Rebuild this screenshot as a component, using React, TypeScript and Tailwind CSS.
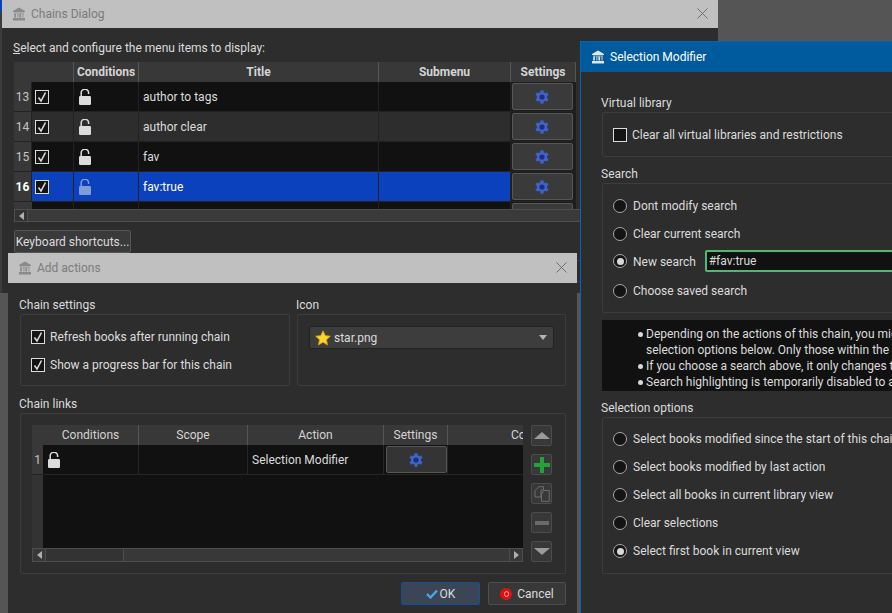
import type { ReactNode } from "react";

const LibraryIcon = ({ className }: { className: string }) => (
  <svg viewBox="0 0 14 14" className={`h-[14px] w-[14px] shrink-0 ${className}`}>
    <path d="M7 0.5 L13 4 V5 H1 V4 Z" fill="currentColor" />
    <rect x="2" y="5.5" width="10" height="1" fill="currentColor" opacity="0.7" />
    <rect x="2.2" y="6.5" width="1.7" height="4" fill="currentColor" />
    <rect x="5" y="6.5" width="1.7" height="4" fill="currentColor" opacity="0.55" />
    <rect x="7.4" y="6.5" width="1.7" height="4" fill="currentColor" />
    <rect x="10.2" y="6.5" width="1.7" height="4" fill="currentColor" opacity="0.55" />
    <rect x="1" y="11" width="12" height="2.5" fill="currentColor" />
  </svg>
);

const CloseIcon = () => (
  <svg viewBox="0 0 11 11" className="h-[11px] w-[11px] text-[#6f6f6f]">
    <path d="M0.5 0.5 L10.5 10.5 M10.5 0.5 L0.5 10.5" stroke="currentColor" strokeWidth="1" />
  </svg>
);

const LockIcon = ({ selected }: { selected?: boolean }) => (
  <svg viewBox="0 0 12 16" className={`h-[16px] w-[12px] ${selected ? "text-[#7f9cd9]" : "text-[#dcdcdc]"}`}>
    <path d="M2.2 8 V4.2 A3.6 3.6 0 0 1 9.6 3.6 V5" fill="none" stroke="currentColor" strokeWidth="1.5" />
    <rect x="0" y="7" width="12" height="9" rx="1.2" fill="currentColor" />
  </svg>
);

const GearIcon = () => (
  <svg viewBox="0 0 16 16" className="h-[14px] w-[14px]">
    {[0, 60, 120, 180, 240, 300].map((a) => (
      <rect key={a} x="6.2" y="0.4" width="3.6" height="3.2" fill="#3f63cf" transform={`rotate(${a} 8 8)`} />
    ))}
    <circle cx="8" cy="8" r="5.8" fill="#3f63cf" />
    <circle cx="8" cy="8" r="3" fill="#1f2f78" />
  </svg>
);

const Check = () => (
  <svg viewBox="0 0 12 12" className="h-[12px] w-[12px] text-[#d8d8d8]">
    <path d="M2.5 6.5 L5 10 L9.5 1.5" fill="none" stroke="currentColor" strokeWidth="1.6" />
  </svg>
);

const Checkbox = ({ checked }: { checked?: boolean }) => (
  <span className="flex h-[14px] w-[14px] shrink-0 items-center justify-center border border-[#dcdcdc] bg-[#141414]">
    {checked && <Check />}
  </span>
);

const Radio = ({ checked }: { checked?: boolean }) => (
  <span className="flex h-[14px] w-[14px] shrink-0 items-center justify-center rounded-full border border-[#a8a8a8] bg-[#141414]">
    {checked && <span className="h-[7px] w-[7px] rounded-full bg-[#d8d8d8]" />}
  </span>
);

const TitleBar = ({ title, active, close, className }: { title: string; active?: boolean; close?: boolean; className: string }) => (
  <div className={`flex shrink-0 items-center pb-[1px] pl-[10px] ${className} ${active ? "bg-[#005a9e] text-white" : "bg-[#c0c0c0] text-[#7b7b7b]"}`}>
    <LibraryIcon className={active ? "text-[#e4e4e4]" : "text-[#8a8a8a]"} />
    <span className="ml-[5px] flex-1">{title}</span>
    {close && (
      <span className="mr-[10px] pb-[1px]">
        <CloseIcon />
      </span>
    )}
  </div>
);

const Group = ({ className, children }: { className: string; children: ReactNode }) => (
  <div className={`rounded-[2px] border border-[#3d3d3d] ${className}`}>{children}</div>
);

const Label = ({ className, children }: { className: string; children: ReactNode }) => (
  <div className={`-ml-px flex h-[18px] items-center ${className}`}>{children}</div>
);

const HeaderCell = ({ w, bold, children }: { w: string; bold?: boolean; children?: ReactNode }) => (
  <div className={`flex h-[20px] shrink-0 items-center justify-center border-r border-[#555] text-[#d4d4d4] ${w} ${bold ? "font-bold" : ""}`}>
    {children}
  </div>
);

const SettingsButton = ({ className }: { className: string }) => (
  <div className={`flex h-[27px] w-[61px] items-center justify-center rounded-[2px] border border-[#575757] pr-[1px] ${className}`}>
    <GearIcon />
  </div>
);

const rows = [
  { n: 13, title: "author to tags", bg: "bg-[#111111]" },
  { n: 14, title: "author clear", bg: "bg-[#2d2d2d]" },
  { n: 15, title: "fav", bg: "bg-[#111111]" },
  { n: 16, title: "fav:true", bg: "bg-[#0b41bd]", selected: true },
];

const ChainRow = ({ n, title, bg, selected }: { n: number; title: string; bg: string; selected?: boolean }) => (
  <div className="flex h-[30px]">
    <div className={`flex w-[18px] shrink-0 items-center justify-center border-b border-r border-[#222] bg-[#383838] ${selected ? "font-bold text-white" : "text-[#c4c4c4]"}`}>
      {n}
    </div>
    <div className={`flex w-[42px] shrink-0 items-center border-b border-r border-[#222] pl-[3px] ${bg}`}>
      <Checkbox checked />
    </div>
    <div className={`flex w-[65px] shrink-0 items-center border-b border-r border-[#222] pl-[5px] ${bg}`}>
      <LockIcon selected={selected} />
    </div>
    <div className={`flex w-[240px] shrink-0 items-center border-b border-r border-[#222] pl-[4px] ${selected ? "text-white" : ""} ${bg}`}>
      {title}
    </div>
    <div className={`w-[132px] shrink-0 border-b border-r border-[#222] ${bg}`} />
    <div className="w-[65px] shrink-0 border-b border-[#222] bg-[#1d1d1d] pl-px pt-px">
      <SettingsButton className="bg-[#3a3a3a]" />
    </div>
  </div>
);

const ChainsDialog = () => (
  <div className="absolute left-[2px] top-0 flex h-[293px] w-[716px] flex-col bg-[#2d2d2d]">
    <TitleBar title="Chains Dialog" close className="h-[28px]" />
    <div className="px-[12px] pt-[12px]">
      <div className="-ml-px h-[16px] leading-[16px]">
        <span className="underline">S</span>elect and configure the menu items to display:
      </div>
      <div className="mt-[6px] w-[640px]">
        <div className="flex w-[562px] bg-[#383838]">
          <HeaderCell w="w-[60px]" />
          <HeaderCell w="w-[65px]" bold>Conditions</HeaderCell>
          <HeaderCell w="w-[240px]" bold>Title</HeaderCell>
          <HeaderCell w="w-[132px]" bold>Submenu</HeaderCell>
          <HeaderCell w="w-[65px]" bold>Settings</HeaderCell>
        </div>
        {rows.map((r) => (
          <ChainRow key={r.n} {...r} />
        ))}
        <div className="flex h-[7px] w-[562px] overflow-hidden">
          <div className="w-[18px] shrink-0 bg-[#383838]" />
          <div className="w-[42px] shrink-0 border-r border-[#222] bg-[#111111]" />
          <div className="w-[65px] shrink-0 border-r border-[#222] bg-[#111111]" />
          <div className="w-[240px] shrink-0 border-r border-[#222] bg-[#111111]" />
          <div className="w-[132px] shrink-0 border-r border-[#222] bg-[#111111]" />
          <div className="w-[65px] shrink-0 bg-[#1d1d1d] pl-px pt-px">
            <SettingsButton className="bg-[#3a3a3a]" />
          </div>
        </div>
        <div className="flex h-[13px] border-y border-[#4e4e4e] bg-[#3a3a3a]">
          <div className="flex w-[14px] items-center justify-center border-x border-[#4e4e4e] bg-[#333]">
            <span className="h-0 w-0 border-y-[4px] border-r-[5px] border-y-transparent border-r-[#b0b0b0]" />
          </div>
        </div>
      </div>
      <button className="mt-[8px] h-[23px] w-[117px] whitespace-nowrap rounded-[2px] border border-[#555] bg-[#3a3a3a] text-center">
        Keyboard shortcuts...
      </button>
    </div>
    <div className="absolute left-[575px] top-[260px] h-[22px] w-[3px] border-y border-[#0b41bd]" />
  </div>
);

const SideButton = ({ children }: { children: ReactNode }) => (
  <div className="flex h-[21px] w-[21px] items-center justify-center rounded-[2px] border border-[#4c4c4c] bg-[#383838]">
    {children}
  </div>
);

const AddActions = () => (
  <div className="absolute left-[8px] top-[253px] flex h-[360px] w-[569px] flex-col bg-[#2d2d2d]">
    <TitleBar title="Add actions" close className="h-[30px]" />
    <div className="pl-[12px] pr-[11px] pt-[13px]">
      <div className="flex gap-[7px]">
        <div className="w-[270px]">
          <Label className="">Chain settings</Label>
          <Group className="h-[72px] pl-[10px] pt-[15px]">
            <div className="flex h-[14px] items-center gap-[5px]">
              <Checkbox checked />
              <span>Refresh books after running chain</span>
            </div>
            <div className="mt-[14px] flex h-[14px] items-center gap-[5px]">
              <Checkbox checked />
              <span>Show a progress bar for this chain</span>
            </div>
          </Group>
        </div>
        <div className="w-[269px]">
          <Label className="">Icon</Label>
          <Group className="h-[72px] pl-[11px] pt-[11px]">
            <div className="flex h-[23px] w-[245px] items-center rounded-[2px] border border-[#222] bg-[#3d3d3d] pl-[5px] pr-[6px]">
              <svg viewBox="0 0 16 16" className="h-[16px] w-[16px] shrink-0">
                <polygon points="8,0.8 10.2,5.6 15.4,6.2 11.5,9.7 12.6,14.9 8,12.3 3.4,14.9 4.5,9.7 0.6,6.2 5.8,5.6" fill="#fbd52a" stroke="#d49e12" strokeWidth="0.8" strokeLinejoin="round" />
              </svg>
              <span className="ml-[3px] flex-1">star.png</span>
              <span className="h-0 w-0 border-x-[4px] border-t-[5px] border-x-transparent border-t-[#b4b4b4]" />
            </div>
          </Group>
        </div>
      </div>
      <Label className="mt-[9px]">Chain links</Label>
      <Group className="flex h-[161px] gap-[8px] pl-[11px] pt-[11px]">
        <div className="h-[137px] w-[491px]">
          <div className="flex bg-[#383838]">
            <HeaderCell w="w-[107px] pl-[11px]">Conditions</HeaderCell>
            <HeaderCell w="w-[109px]">Scope</HeaderCell>
            <HeaderCell w="w-[136px]">Action</HeaderCell>
            <HeaderCell w="w-[64px]">Settings</HeaderCell>
            <div className="w-[75px] overflow-hidden whitespace-nowrap pl-[63px] text-[#d4d4d4] leading-[20px]">
              Comment
            </div>
          </div>
          <div className="flex h-[103px] bg-[#111111]">
            <div className="w-[11px] shrink-0 bg-[#333]">
              <div className="flex h-[30px] items-center justify-center border-b border-[#222] bg-[#383838] text-[#c4c4c4]">1</div>
            </div>
            <div className="flex h-[30px] flex-1 border-b border-[#262626]">
              <div className="flex w-[96px] shrink-0 items-center border-r border-[#262626] pl-[5px]">
                <LockIcon />
              </div>
              <div className="w-[109px] shrink-0 border-r border-[#262626]" />
              <div className="flex w-[136px] shrink-0 items-center border-r border-[#262626] pl-[4px]">Selection Modifier</div>
              <div className="w-[64px] shrink-0 border-r border-[#262626] pl-[2px] pt-px">
                <SettingsButton className="bg-[#343434]" />
              </div>
            </div>
          </div>
          <div className="flex h-[14px] border border-[#4e4e4e] bg-[#383838]">
            <div className="flex w-[13px] items-center justify-center border-r border-[#4e4e4e]">
              <span className="h-0 w-0 border-y-[4px] border-r-[5px] border-y-transparent border-r-[#b0b0b0]" />
            </div>
            <div className="w-[78px] border-r border-[#4e4e4e] bg-[#333]" />
            <div className="flex-1" />
            <div className="flex w-[13px] items-center justify-center border-l border-[#4e4e4e]">
              <span className="h-0 w-0 border-y-[4px] border-l-[5px] border-y-transparent border-l-[#b0b0b0]" />
            </div>
          </div>
        </div>
        <div className="flex flex-col gap-[8px]">
          <SideButton>
            <span className="h-0 w-0 border-x-[8px] border-b-[7px] border-x-transparent border-b-[#9a9a9a]" />
          </SideButton>
          <SideButton>
            <svg viewBox="0 0 16 16" className="h-[16px] w-[16px]">
              <path d="M6 0 H10 V6 H16 V10 H10 V16 H6 V10 H0 V6 H6 Z" fill="#23a13a" />
            </svg>
          </SideButton>
          <SideButton>
            <svg viewBox="0 0 16 16" className="h-[16px] w-[16px] text-[#6e6e6e]">
              <path d="M5 0.7 H9.5 V4 H7 V11 H1 V4.5 Z" fill="none" stroke="currentColor" />
              <path d="M10 4.5 H15.2 V15.3 H7.5 V8 Z" fill="none" stroke="currentColor" />
            </svg>
          </SideButton>
          <SideButton>
            <span className="h-[4px] w-[14px] bg-[#6a6a6a]" />
          </SideButton>
          <SideButton>
            <span className="h-0 w-0 border-x-[8px] border-t-[7px] border-x-transparent border-t-[#9a9a9a]" />
          </SideButton>
        </div>
      </Group>
      <div className="mt-[8px] flex justify-end gap-[8px]">
        <button className="flex h-[23px] w-[79px] items-center justify-center gap-[2px] rounded-[2px] border border-[#11509e] bg-[#3a4556]">
          <svg viewBox="0 0 12 10" className="h-[10px] w-[12px]">
            <path d="M1 5 L4.5 8.5 L11 1.5" fill="none" stroke="#4aa8dc" strokeWidth="2.4" />
          </svg>
          OK
        </button>
        <button className="flex h-[23px] w-[78px] items-center justify-center gap-[5px] rounded-[2px] border border-[#4e4e4e] bg-[#383838]">
          <span className="flex h-[12px] w-[12px] items-center justify-center rounded-full bg-[#e01010]">
            <span className="h-[6px] w-[5px] rounded-full border border-[#ffb0b0]" />
          </span>
          Cancel
        </button>
      </div>
    </div>
  </div>
);

const RadioRow = ({ label, checked, className, children }: { label: string; checked?: boolean; className: string; children?: ReactNode }) => (
  <div className={`flex items-center gap-[6px] whitespace-nowrap ${className}`}>
    <Radio checked={checked} />
    <span className={children ? "w-[66px] pt-px" : ""}>{label}</span>
    {children}
  </div>
);

const SelectionModifier = () => (
  <div className="absolute left-[580px] top-[41px] flex h-[572px] w-[420px] flex-col border-l border-t border-[#0b64ad] bg-[#2d2d2d]">
    <TitleBar title="Selection Modifier" active className="h-[30px]" />
    <div className="pl-[21px] pt-[22px]">
      <Label className="">Virtual library</Label>
      <Group className="flex h-[45px] items-center gap-[5px] pl-[10px]">
        <Checkbox />
        Clear all virtual libraries and restrictions
      </Group>
      <Label className="mt-[8px]">Search</Label>
      <Group className="h-[130px] pl-[10px] pt-[11px]">
        <RadioRow label="Dont modify search" className="h-[22px]" />
        <RadioRow label="Clear current search" className="mt-[6px] h-[22px]" />
        <RadioRow label="New search" checked className="mt-[5px] h-[22px]">
          <input
            readOnly
            value="#fav:true"
            className="ml-px h-[22px] w-[300px] rounded-[2px] border-2 border-[#4dba72] bg-[#111111] pl-[2px] text-[#dcdcdc] outline-none"
          />
        </RadioRow>
        <RadioRow label="Choose saved search" className="mt-[8px] h-[22px]" />
      </Group>
      <div className="mt-[7px] h-[71px] whitespace-nowrap bg-[#111111] pl-[36px] pt-[6px] leading-[16px]">
        {[
          "Depending on the actions of this chain, you might want to use the",
          "",
          "If you choose a search above, it only changes the view",
          "Search highlighting is temporarily disabled to avoid",
        ].map((line, i) =>
          line ? (
            <div key={i} className="flex h-[16px] items-center gap-[3px]">
              <span className="h-[5px] w-[5px] shrink-0 rounded-full bg-[#d8d8d8]" />
              <span>{line}</span>
            </div>
          ) : (
            <div key={i} className="h-[16px] pl-[8px]">
              selection options below. Only those within the current view
            </div>
          )
        )}
      </div>
      <Label className="mt-[8px]">Selection options</Label>
      <Group className="h-[157px] pl-[10px] pt-[7px]">
        <RadioRow label="Select books modified since the start of this chain" className="h-[28px]" />
        <RadioRow label="Select books modified by last action" className="h-[28px]" />
        <RadioRow label="Select all books in current library view" className="h-[28px]" />
        <RadioRow label="Clear selections" className="h-[28px]" />
        <RadioRow label="Select first book in current view" checked className="h-[28px]" />
      </Group>
    </div>
  </div>
);

const App = () => {
  return (
    <div className="relative h-[613px] w-[892px] overflow-hidden bg-[#555555] font-['Roboto',sans-serif] text-[12px] text-[#dcdcdc]">
      <div className="absolute left-0 top-0 h-[293px] w-[2px] bg-[#3c3c3c]" />
      <div className="absolute left-0 top-0 h-[12px] w-[2px] bg-[#0b41bd]" />
      <ChainsDialog />
      <AddActions />
      <SelectionModifier />
    </div>
  );
};
export default App;
